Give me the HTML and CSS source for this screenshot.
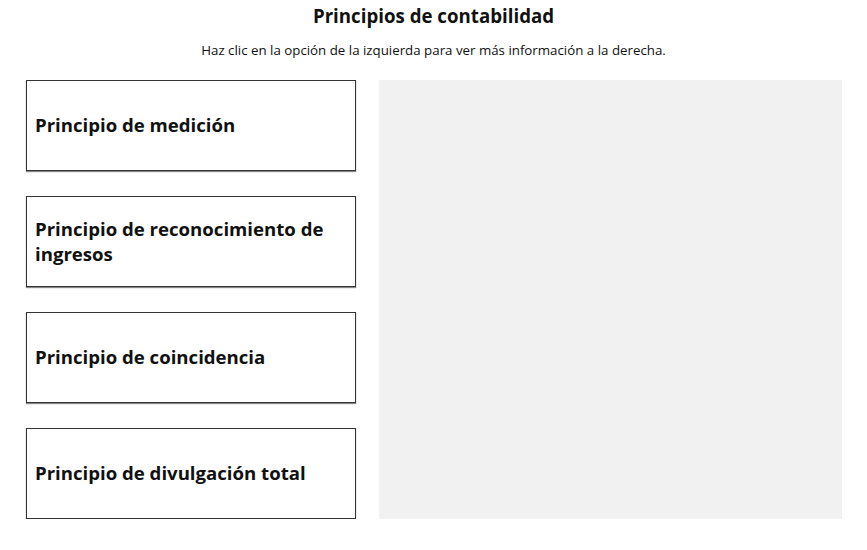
FILE: index.html
```html
<!DOCTYPE html>
<html>
<head>
    <title>Principios de contabilidad</title>
    <link rel="stylesheet" href="styles.css">
</head>
<body>
    <div class="header">
        <h1 class="title">Principios de contabilidad</h1>
        <p class="intro">Haz clic en la opción de la izquierda para ver más información a la derecha.</p>
    </div>
    <div class="layout">
        <div class="options">
            <div class="option">Principio de medición</div>
            <div class="option">Principio de reconocimiento de ingresos</div>
            <div class="option">Principio de coincidencia</div>
            <div class="option">Principio de divulgación total</div>
        </div>
        <!-- Panel where the info is shown -->
        <div class="details"></div>
    </div>
</body>
</html>
```

FILE: styles.css
```css
body {
    margin: 0;
    font-family: "Open Sans", Arial, sans-serif;
    color: #111;
    background: white;
}

.header {
    text-align: center;
    padding-top: 4px;
}

.title {
    font-size: 18.7px;
    font-weight: bold;
    margin: 0;
    line-height: 24px;
}

.intro {
    font-size: 13.3px;
    margin: 13px 0 0 0;
    line-height: 18px;
}

.layout {
    display: flex;
    gap: 23px;
    padding: 21px 25px 0 26px;
}

.options {
    display: flex;
    flex-direction: column;
    gap: 25px;
    width: 330px;
}

.option {
    box-sizing: border-box;
    height: 91px;
    border: 1px solid #333;
    box-shadow: 0 1px 1px #888;
    padding: 0 12px 2px 8px;
    display: flex;
    align-items: center;
    font-size: 18.6px;
    font-weight: bold;
    line-height: 25px;
    cursor: pointer;
}

.details {
    flex: 1;
    height: 439px;
    background-color: #f1f1f1;
}
```
